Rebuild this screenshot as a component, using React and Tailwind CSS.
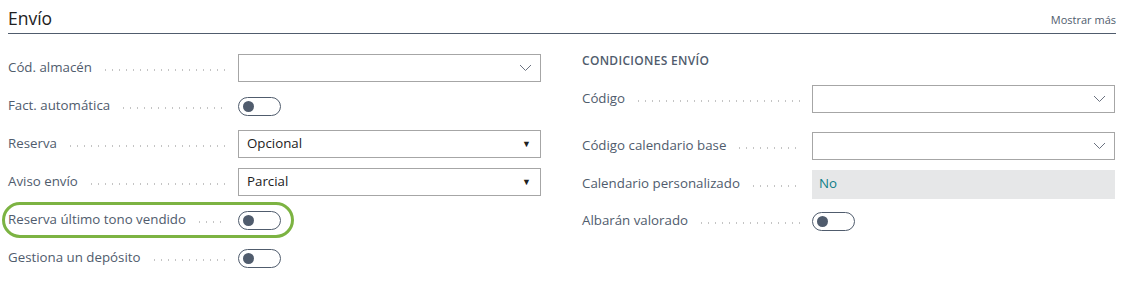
import React from "react";

const font = { fontFamily: "'Open Sans', 'Noto Sans', sans-serif" };

function Dots() {
  return (
    <div className="flex-1 h-[2px] mt-[3px] ml-[10px] mr-[2px] bg-[radial-gradient(circle,#c4c4c4_0.9px,transparent_1px)] bg-[length:7px_2px] bg-repeat-x" />
  );
}

function Label({ text }) {
  return (
    <div className="w-[230px] pr-[10px] flex items-center shrink-0">
      <span className="text-[13.3px] text-[#505c6d] whitespace-nowrap">{text}</span>
      <Dots />
    </div>
  );
}

function Chevron() {
  return (
    <svg width="13" height="8" viewBox="0 0 13 8" className="mr-[8px]">
      <path d="M1 1 L6.5 6.5 L12 1" fill="none" stroke="#6b7280" strokeWidth="1" />
    </svg>
  );
}

function Combo() {
  return (
    <div className="flex-1 h-[28px] border border-[#a6a6a6] bg-white flex items-center justify-end">
      <Chevron />
    </div>
  );
}

function Select({ value }) {
  return (
    <div className="flex-1 h-[28px] border border-[#a6a6a6] bg-white flex items-center justify-between pl-[8px] pr-[9px]">
      <span className="text-[13.3px] text-[#212121]">{value}</span>
      <span className="text-[9px] text-[#212121]">▼</span>
    </div>
  );
}

function Toggle() {
  return (
    <div className="w-[43px] h-[19px] rounded-full border border-[#505c6d] flex items-center pl-[4px]">
      <div className="w-[11px] h-[11px] rounded-full bg-[#505c6d]" />
    </div>
  );
}

function Row({ label, children, className = "" }) {
  return (
    <div className={"flex items-center " + className}>
      <Label text={label} />
      {children}
    </div>
  );
}

export default function App() {
  return (
    <div className="w-[1124px] h-[299px] bg-white" style={font}>
      <div className="mx-[8px] flex items-end justify-between border-b border-[#505c6d] pt-[7px] pb-[4px]">
        <span className="text-[17.5px] text-[#212121] leading-[22px]">Envío</span>
        <span className="text-[11px] text-[#505c6d] leading-[14px] mb-[2px]">Mostrar más</span>
      </div>
      <div className="grid grid-cols-[533px_533px] gap-x-[41px] px-[8px]">
        <div className="flex flex-col">
          <Row label="Cód. almacén" className="h-[38px] mt-[15px]">
            <Combo />
          </Row>
          <Row label="Fact. automática" className="h-[38px]">
            <Toggle />
          </Row>
          <Row label="Reserva" className="h-[38px]">
            <Select value="Opcional" />
          </Row>
          <Row label="Aviso envío" className="h-[38px]">
            <Select value="Parcial" />
          </Row>
          <div className="relative">
            <Row label="Reserva último tono vendido" className="h-[38px]">
              <Toggle />
            </Row>
            <div className="absolute left-[-6px] top-[1px] w-[292px] h-[36px] rounded-full border-[3px] border-[#7cb342]" />
          </div>
          <Row label="Gestiona un depósito" className="h-[38px]">
            <Toggle />
          </Row>
        </div>
        <div className="flex flex-col">
          <div className="mt-[18px] h-[18px] flex items-center text-[12px] font-semibold text-[#505c6d] tracking-[0.3px]">
            CONDICIONES ENVÍO
          </div>
          <Row label="Código" className="h-[38px] mt-[10px]">
            <Combo />
          </Row>
          <Row label="Código calendario base" className="h-[38px] mt-[9px]">
            <Combo />
          </Row>
          <Row label="Calendario personalizado" className="h-[38px]">
            <div className="flex-1 h-[29px] bg-[#e6e7e8] flex items-center pl-[7px]">
              <span className="text-[13.3px] text-[#0d7e87]">No</span>
            </div>
          </Row>
          <Row label="Albarán valorado" className="h-[36px]">
            <Toggle />
          </Row>
        </div>
      </div>
    </div>
  );
}
